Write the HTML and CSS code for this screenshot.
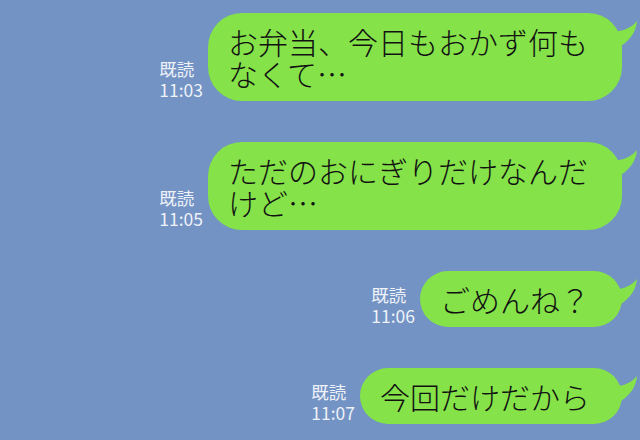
FILE: index.html
```html
<!DOCTYPE html>
<html lang="ja">
<head>
    <meta charset="UTF-8">
    <meta name="viewport" content="width=device-width, initial-scale=1.0">
    <title>トーク</title>
    <link rel="stylesheet" href="styles.css">
</head>
<body>

<div class="chat">
    <!-- 自分のメッセージ -->
    <div class="row">
        <div class="meta"><span>既読</span><span>11:03</span></div>
        <div class="bubble">お弁当、今日もおかず何もなくて…
            <svg class="tail" width="32" height="36" viewBox="0 0 32 36"><path d="M0 17 C9 21 24 17 31 8 C30 19 24 27 15 33 L0 33 Z" fill="#85e249"/></svg>
        </div>
    </div>

    <div class="row">
        <div class="meta"><span>既読</span><span>11:05</span></div>
        <div class="bubble">ただのおにぎりだけなんだけど…
            <svg class="tail" width="32" height="36" viewBox="0 0 32 36"><path d="M0 17 C9 21 24 17 31 8 C30 19 24 27 15 33 L0 33 Z" fill="#85e249"/></svg>
        </div>
    </div>

    <div class="row">
        <div class="meta"><span>既読</span><span>11:06</span></div>
        <div class="bubble">ごめんね？
            <svg class="tail" width="32" height="36" viewBox="0 0 32 36"><path d="M0 17 C9 21 24 17 31 8 C30 19 24 27 15 33 L0 33 Z" fill="#85e249"/></svg>
        </div>
    </div>

    <div class="row">
        <div class="meta"><span>既読</span><span>11:07</span></div>
        <div class="bubble">今回だけだから
            <svg class="tail" width="32" height="36" viewBox="0 0 32 36"><path d="M0 17 C9 21 24 17 31 8 C30 19 24 27 15 33 L0 33 Z" fill="#85e249"/></svg>
        </div>
    </div>
</div>

</body>
</html>
```

FILE: styles.css
```css
body {
    margin: 0;
    background-color: #7393c4;
    font-family: "Noto Sans CJK JP", "Noto Sans", sans-serif;
}
.chat {
    height: 440px;
    box-sizing: border-box;
    padding: 13px 18px 0 0;
    display: flex;
    flex-direction: column;
    align-items: flex-end;
    gap: 41px;
}
.row {
    display: flex;
    align-items: flex-end;
    gap: 5px;
}
.meta {
    display: flex;
    flex-direction: column;
    color: #eef2f8;
    font-size: 17.5px;
    line-height: 21px;
    margin-bottom: 1px;
}
.bubble {
    position: relative;
    max-width: 414px;
    box-sizing: border-box;
    padding: 12px 32px 12px 20px;
    background-color: #85e249;
    border-radius: 34px;
    color: #111;
    font-size: 30px;
    font-weight: 300;
    line-height: 32px;
}
.tail {
    position: absolute;
    top: 0;
    right: -16px;
}
```
